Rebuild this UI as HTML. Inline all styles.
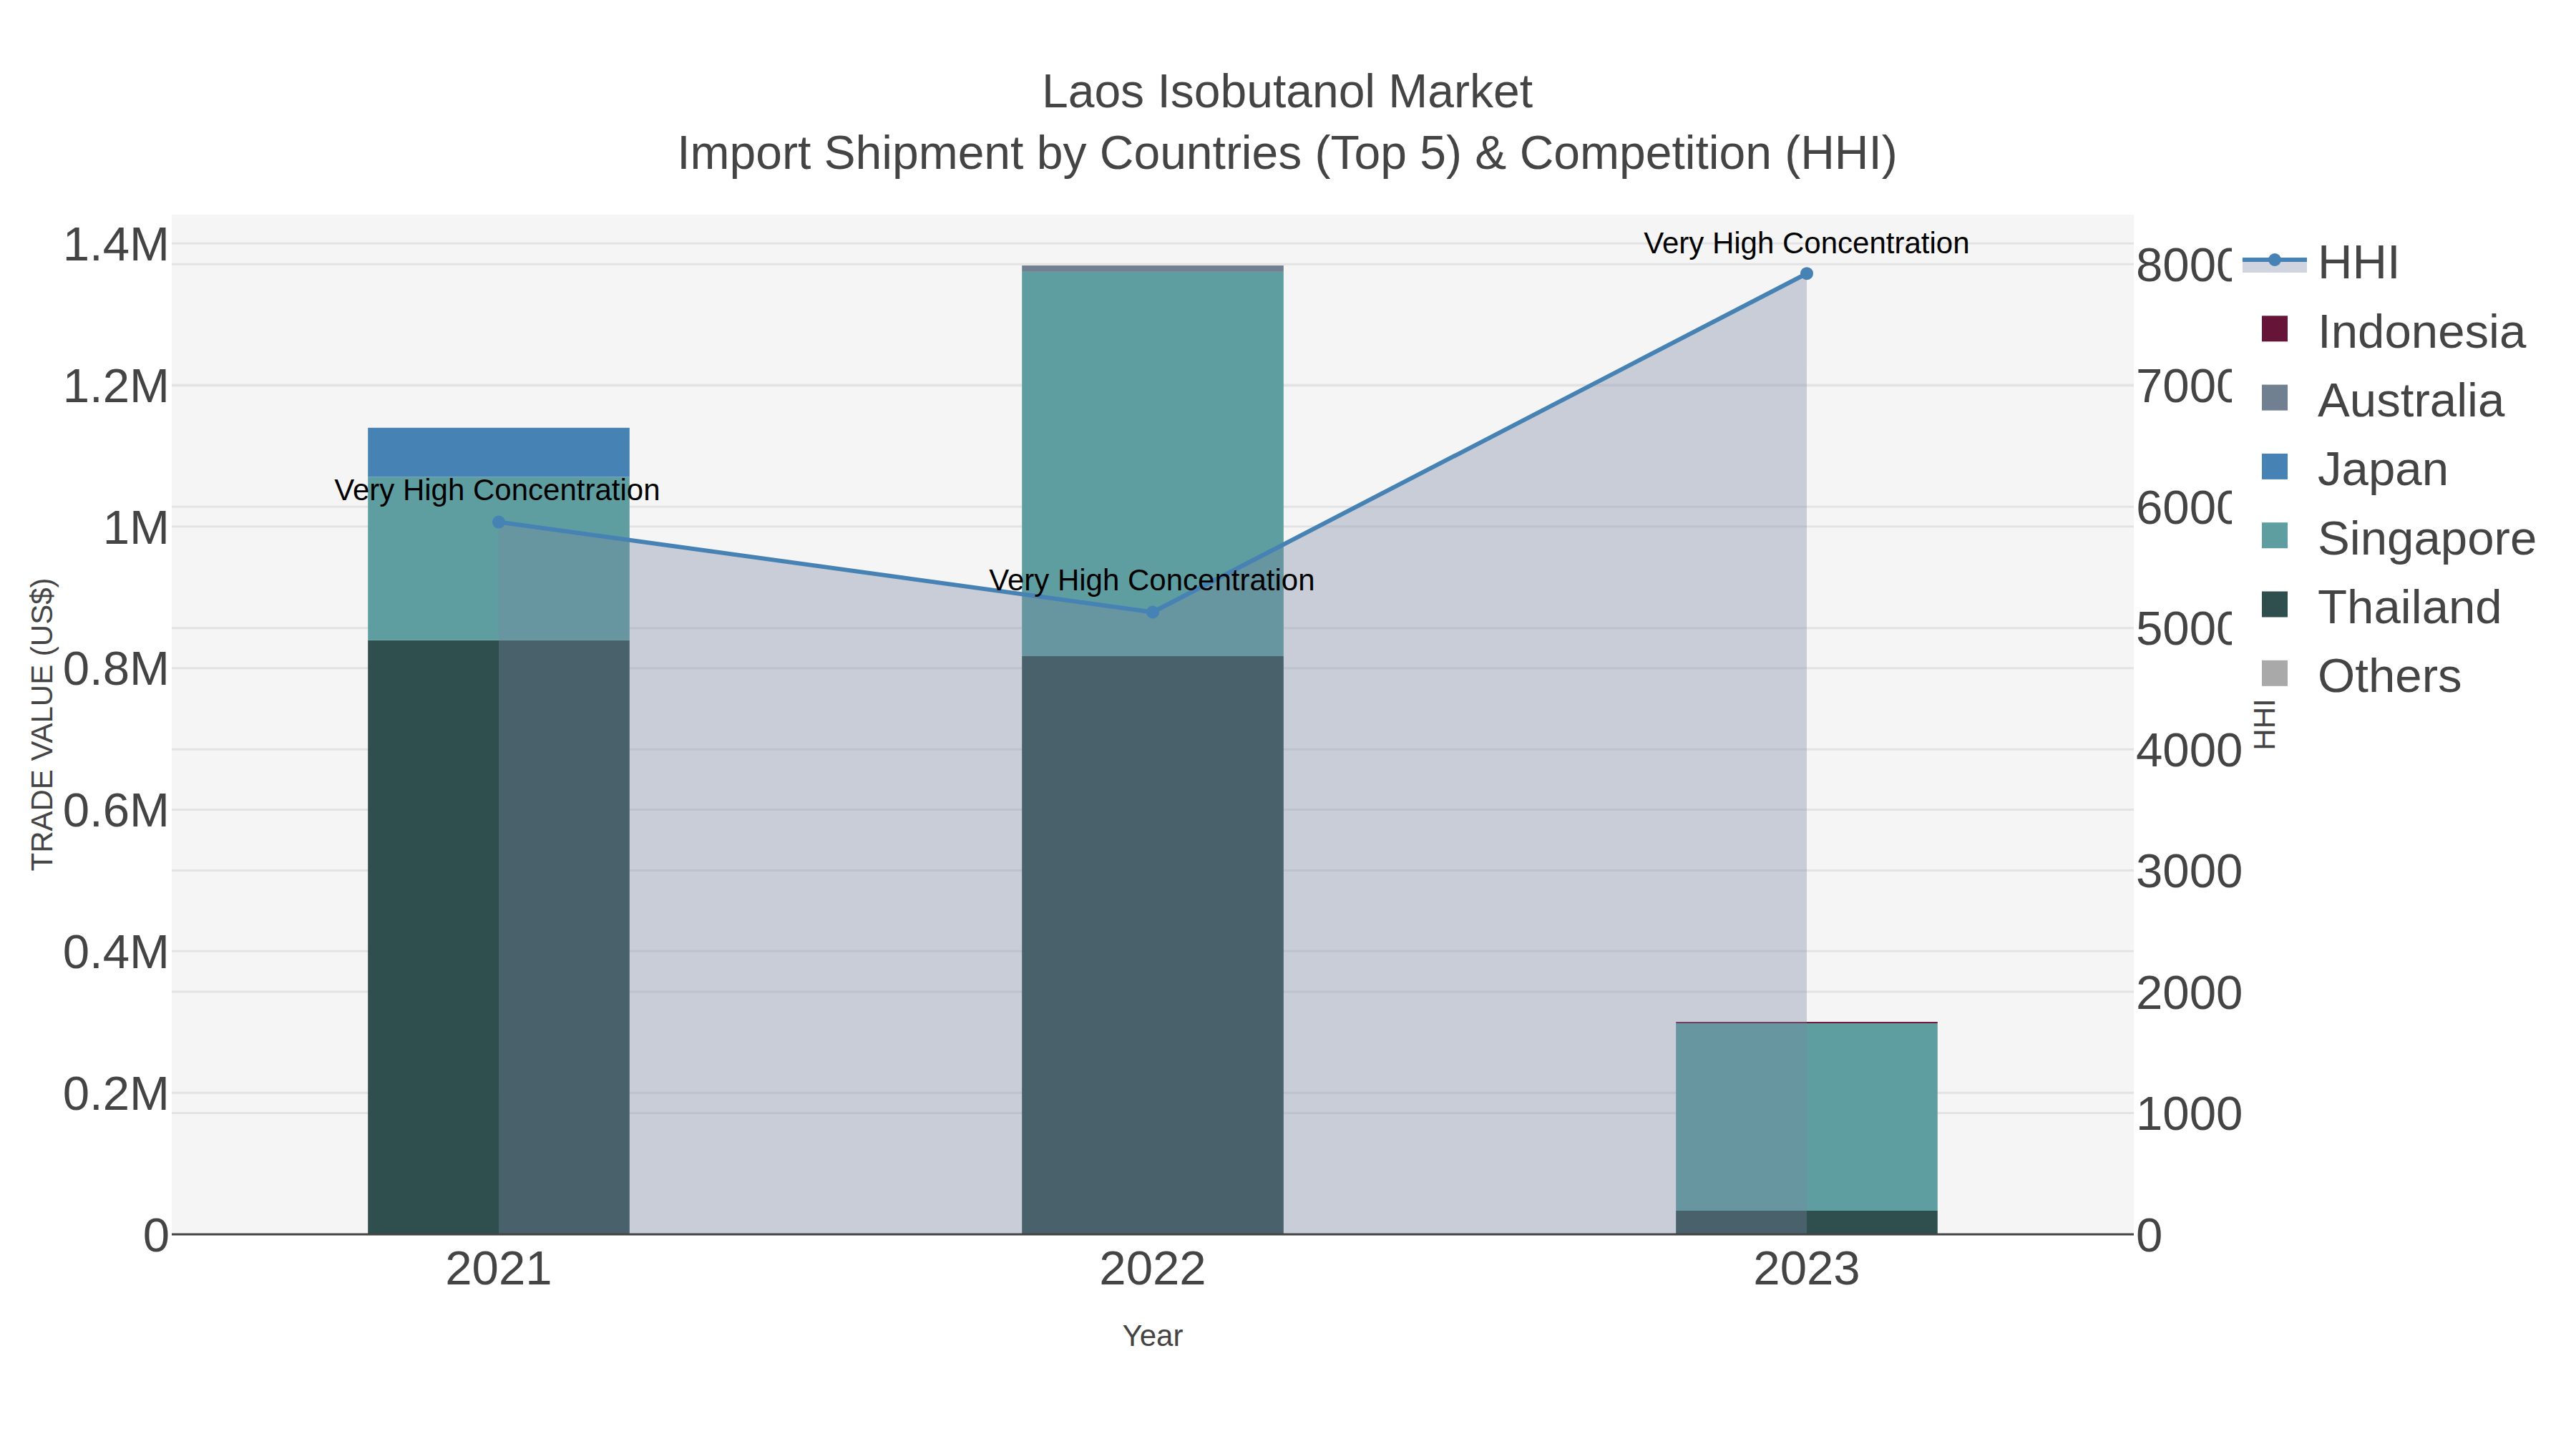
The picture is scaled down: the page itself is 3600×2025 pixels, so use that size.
<!DOCTYPE html>
<html><head><meta charset="utf-8"><title>Laos Isobutanol Market</title>
<style>html,body{margin:0;padding:0;background:#ffffff;overflow:hidden;} svg{display:block;} text{font-family:"Liberation Sans", sans-serif;}</style>
</head><body>
<svg width="3600" height="2025" viewBox="0 0 1200 675">
<rect x="0" y="0" width="1200" height="675" fill="#ffffff"/>
<rect x="80.0" y="100.0" width="914.0" height="475.0" fill="#f5f5f5"/>
<line x1="80.0" x2="994.0" y1="509.06" y2="509.06" stroke="#e3e3e3" stroke-width="1"/>
<line x1="80.0" x2="994.0" y1="443.12" y2="443.12" stroke="#e3e3e3" stroke-width="1"/>
<line x1="80.0" x2="994.0" y1="377.17" y2="377.17" stroke="#e3e3e3" stroke-width="1"/>
<line x1="80.0" x2="994.0" y1="311.23" y2="311.23" stroke="#e3e3e3" stroke-width="1"/>
<line x1="80.0" x2="994.0" y1="245.29" y2="245.29" stroke="#e3e3e3" stroke-width="1"/>
<line x1="80.0" x2="994.0" y1="179.35" y2="179.35" stroke="#e3e3e3" stroke-width="1"/>
<line x1="80.0" x2="994.0" y1="113.41" y2="113.41" stroke="#e3e3e3" stroke-width="1"/>
<line x1="80.0" x2="994.0" y1="518.51" y2="518.51" stroke="#e3e3e3" stroke-width="1"/>
<line x1="80.0" x2="994.0" y1="462.02" y2="462.02" stroke="#e3e3e3" stroke-width="1"/>
<line x1="80.0" x2="994.0" y1="405.54" y2="405.54" stroke="#e3e3e3" stroke-width="1"/>
<line x1="80.0" x2="994.0" y1="349.05" y2="349.05" stroke="#e3e3e3" stroke-width="1"/>
<line x1="80.0" x2="994.0" y1="292.56" y2="292.56" stroke="#e3e3e3" stroke-width="1"/>
<line x1="80.0" x2="994.0" y1="236.07" y2="236.07" stroke="#e3e3e3" stroke-width="1"/>
<line x1="80.0" x2="994.0" y1="179.58" y2="179.58" stroke="#e3e3e3" stroke-width="1"/>
<line x1="80.0" x2="994.0" y1="123.10" y2="123.10" stroke="#e3e3e3" stroke-width="1"/>
<rect x="171.40" y="298.27" width="121.87" height="276.73" fill="#2f4f4f"/>
<rect x="171.40" y="222.17" width="121.87" height="76.10" fill="#5f9ea0"/>
<rect x="171.40" y="199.27" width="121.87" height="22.90" fill="#4682b4"/>
<rect x="476.07" y="305.67" width="121.87" height="269.33" fill="#2f4f4f"/>
<rect x="476.07" y="126.62" width="121.87" height="179.05" fill="#5f9ea0"/>
<rect x="476.07" y="123.68" width="121.87" height="2.94" fill="#708090"/>
<rect x="780.73" y="564.00" width="121.87" height="11.00" fill="#2f4f4f"/>
<rect x="780.73" y="476.70" width="121.87" height="87.30" fill="#5f9ea0"/>
<rect x="780.73" y="476.03" width="121.87" height="0.67" fill="#661437"/>
<polygon points="232.33333333333334,575.0 232.33,243.18 537.00,285.17 841.67,127.41 841.6666666666667,575.0" fill="rgba(120,133,160,0.35)"/>
<polyline points="232.33,243.18 537.00,285.17 841.67,127.41" fill="none" stroke="#4682b4" stroke-width="2" stroke-linejoin="round"/>
<circle cx="232.33333333333334" cy="243.18" r="3" fill="#4682b4"/>
<circle cx="537.0" cy="285.17" r="3" fill="#4682b4"/>
<circle cx="841.6666666666667" cy="127.41" r="3" fill="#4682b4"/>
<text x="231.63" y="233" text-anchor="middle" font-size="14" fill="#000000">Very High Concentration</text>
<text x="536.63" y="275" text-anchor="middle" font-size="14" fill="#000000">Very High Concentration</text>
<text x="841.63" y="118" text-anchor="middle" font-size="14" fill="#000000">Very High Concentration</text>
<line x1="80.0" x2="994.0" y1="575.0" y2="575.0" stroke="#444444" stroke-width="1"/>
<text x="79" y="582.90" text-anchor="end" font-size="22.4" fill="#444444">0</text>
<text x="79" y="516.96" text-anchor="end" font-size="22.4" fill="#444444">0.2M</text>
<text x="79" y="451.02" text-anchor="end" font-size="22.4" fill="#444444">0.4M</text>
<text x="79" y="385.07" text-anchor="end" font-size="22.4" fill="#444444">0.6M</text>
<text x="79" y="319.13" text-anchor="end" font-size="22.4" fill="#444444">0.8M</text>
<text x="79" y="253.19" text-anchor="end" font-size="22.4" fill="#444444">1M</text>
<text x="79" y="187.25" text-anchor="end" font-size="22.4" fill="#444444">1.2M</text>
<text x="79" y="121.31" text-anchor="end" font-size="22.4" fill="#444444">1.4M</text>
<text x="995" y="582.90" font-size="22.4" fill="#444444">0</text>
<text x="995" y="526.41" font-size="22.4" fill="#444444">1000</text>
<text x="995" y="469.92" font-size="22.4" fill="#444444">2000</text>
<text x="995" y="413.44" font-size="22.4" fill="#444444">3000</text>
<text x="995" y="356.95" font-size="22.4" fill="#444444">4000</text>
<text x="995" y="300.46" font-size="22.4" fill="#444444">5000</text>
<text x="995" y="243.97" font-size="22.4" fill="#444444">6000</text>
<text x="995" y="187.48" font-size="22.4" fill="#444444">7000</text>
<text x="995" y="131.00" font-size="22.4" fill="#444444">8000</text>
<text x="232.33" y="598.2" text-anchor="middle" font-size="22.4" fill="#444444">2021</text>
<text x="537.00" y="598.2" text-anchor="middle" font-size="22.4" fill="#444444">2022</text>
<text x="841.67" y="598.2" text-anchor="middle" font-size="22.4" fill="#444444">2023</text>
<text x="537" y="626.9" text-anchor="middle" font-size="14" fill="#444444">Year</text>
<text transform="translate(24.27,337.5) rotate(-90)" x="0" y="0" text-anchor="middle" font-size="14" fill="#444444">TRADE VALUE (US$)</text>
<text x="599.67" y="50" text-anchor="middle" font-size="22" fill="#444444">Laos Isobutanol Market</text>
<text x="599.67" y="78.7" text-anchor="middle" font-size="22" fill="#444444">Import Shipment by Countries (Top 5) &amp; Competition (HHI)</text>
<rect x="1039.67" y="100" width="160.32999999999993" height="226" fill="#ffffff"/>
<rect x="1044.67" y="121.0" width="30" height="6" fill="rgba(120,133,160,0.35)"/>
<line x1="1044.67" x2="1074.67" y1="121.0" y2="121.0" stroke="#4682b4" stroke-width="2"/>
<circle cx="1059.67" cy="121.0" r="3" fill="#4682b4"/>
<text x="1079.67" y="129.80" font-size="22.4" fill="#444444">HHI</text>
<rect x="1053.67" y="147.10" width="12" height="12" fill="#661437"/>
<text x="1079.67" y="161.90" font-size="22.4" fill="#444444">Indonesia</text>
<rect x="1053.67" y="179.20" width="12" height="12" fill="#708090"/>
<text x="1079.67" y="194.00" font-size="22.4" fill="#444444">Australia</text>
<rect x="1053.67" y="211.30" width="12" height="12" fill="#4682b4"/>
<text x="1079.67" y="226.10" font-size="22.4" fill="#444444">Japan</text>
<rect x="1053.67" y="243.40" width="12" height="12" fill="#5f9ea0"/>
<text x="1079.67" y="258.20" font-size="22.4" fill="#444444">Singapore</text>
<rect x="1053.67" y="275.50" width="12" height="12" fill="#2f4f4f"/>
<text x="1079.67" y="290.30" font-size="22.4" fill="#444444">Thailand</text>
<rect x="1053.67" y="307.60" width="12" height="12" fill="#a9a9a9"/>
<text x="1079.67" y="322.40" font-size="22.4" fill="#444444">Others</text>
<text transform="translate(1059.6,337.5) rotate(-90)" x="0" y="0" text-anchor="middle" font-size="14" fill="#444444">HHI</text>
</svg>
</body></html>
